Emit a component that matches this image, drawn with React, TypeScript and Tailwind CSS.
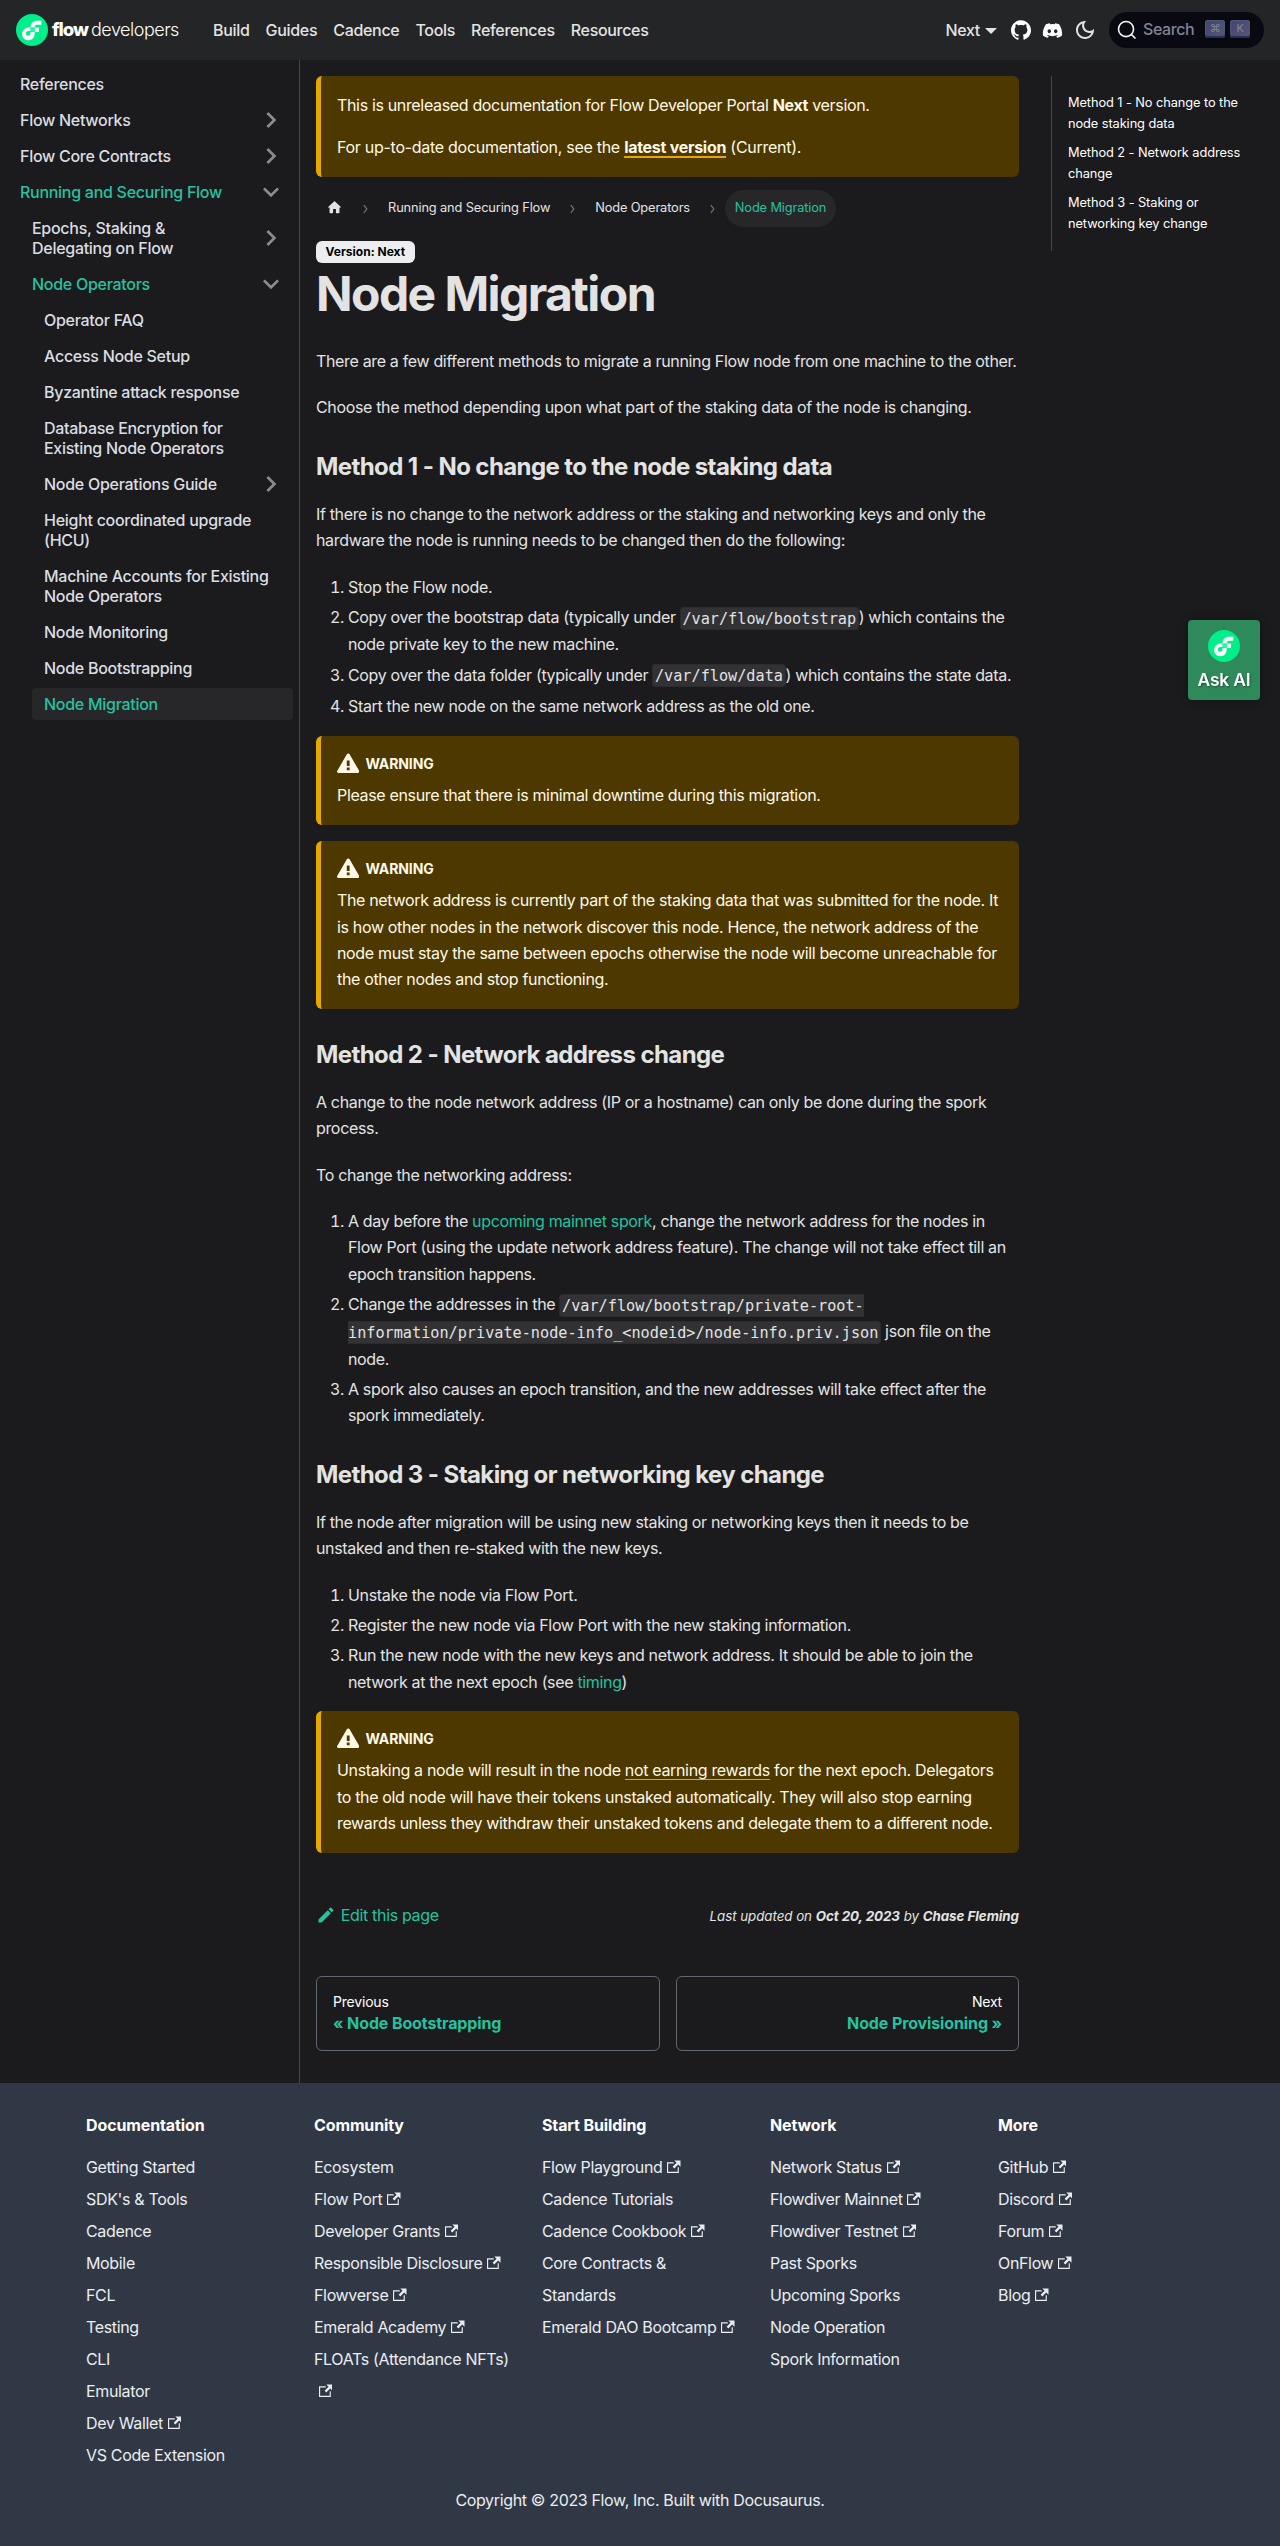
import type { ReactNode } from "react";
import { FaDiscord } from "react-icons/fa";
import { SiGithub } from "react-icons/si";

function FlowMark({ className }: { className: string }) {
  return (
    <svg viewBox="0 0 101 101" className={className}>
      <circle cx="50.5" cy="50.5" r="50.5" fill="#00ef8b" />
      <path
        fill="#fff"
        d="M46 57v4.500a7.500 7.500 0 1 1-7.500-7.500H46V43h-7.500A20 20 0 1 0 59 61.500V57Z"
      />
      <path fill="#fff" d="M46 43v-1.500C46 30 55 21.500 66 21.500h14V34H66c-4 0-7 3-7 7v2Z" />
      <path fill="#fff" d="M59 43h13.600v14H59Z" />
      <path fill="#16ff99" d="M46 43h13v14H46Z" />
    </svg>
  );
}

function Caret({ open }: { open: boolean }) {
  return (
    <svg
      viewBox="0 0 24 24"
      fill="#8d8d8e"
      className={open ? "mr-1.5 size-8 shrink-0 rotate-180" : "mr-1.5 size-8 shrink-0 rotate-90"}
    >
      <path d="M7.41 15.41L12 10.83l4.59 4.58L18 14l-6-6-6 6z" />
    </svg>
  );
}

type MenuEntry = { lines: string[]; level: 0 | 1 | 2; caret?: "open" | "closed"; green?: boolean; active?: boolean };

const MENU: MenuEntry[] = [
  { lines: ["References"], level: 0 },
  { lines: ["Flow Networks"], level: 0, caret: "closed" },
  { lines: ["Flow Core Contracts"], level: 0, caret: "closed" },
  { lines: ["Running and Securing Flow"], level: 0, caret: "open", green: true },
  { lines: ["Epochs, Staking &", "Delegating on Flow"], level: 1, caret: "closed" },
  { lines: ["Node Operators"], level: 1, caret: "open", green: true },
  { lines: ["Operator FAQ"], level: 2 },
  { lines: ["Access Node Setup"], level: 2 },
  { lines: ["Byzantine attack response"], level: 2 },
  { lines: ["Database Encryption for", "Existing Node Operators"], level: 2 },
  { lines: ["Node Operations Guide"], level: 2, caret: "closed" },
  { lines: ["Height coordinated upgrade", "(HCU)"], level: 2 },
  { lines: ["Machine Accounts for Existing", "Node Operators"], level: 2 },
  { lines: ["Node Monitoring"], level: 2 },
  { lines: ["Node Bootstrapping"], level: 2 },
  { lines: ["Node Migration"], level: 2, green: true, active: true },
];

// Nested levels step in by 12px; the highlighted row starts at the parent's text edge.
const INDENT = ["ml-0", "ml-3", "ml-6"];

function Sidebar() {
  return (
    <aside className="w-[300px] shrink-0 border-r border-[#444950] py-2 pr-1.5 pl-2">
      <ul className="flex flex-col gap-1 font-medium tracking-[-0.28px]">
        {MENU.map((m) => (
          <li key={m.lines[0]} className={INDENT[m.level]}>
            <a
              className={
                "flex items-center justify-between rounded leading-5 whitespace-nowrap " +
                (m.active ? "bg-[#272729] " : "") +
                (m.green ? "text-[#25c2a0]" : "text-[#dadde1]")
              }
            >
              <span className="py-1.5 pl-3">
                {m.lines.map((l) => (
                  <span key={l} className="block">
                    {l}
                  </span>
                ))}
              </span>
              {m.caret && <Caret open={m.caret === "open"} />}
            </a>
          </li>
        ))}
      </ul>
    </aside>
  );
}

function Navbar() {
  return (
    <nav className="flex h-[60px] items-center justify-between bg-[#242526] px-4 font-medium tracking-[-0.31px] text-[#e3e3e3]">
      <div className="flex items-center">
        <FlowMark className="size-8" />
        <div className="mr-[22px] ml-1 flex w-[139px] items-baseline whitespace-nowrap text-white">
          <span className="w-[39px] text-[18.500px] font-extrabold tracking-[-1px]">flow</span>
          <span className="text-[18px] font-light tracking-[-0.5px]">developers</span>
        </div>
        <div className="flex gap-4">
          {["Build", "Guides", "Cadence", "Tools", "References", "Resources"].map((t) => (
            <a key={t}>{t}</a>
          ))}
        </div>
      </div>
      <div className="flex items-center">
        <span>Next</span>
        <span className="mt-0.5 ml-[5px] border-x-[6.400px] border-t-[6.400px] border-x-transparent border-t-[#e3e3e3]" />
        <SiGithub className="ml-3.5 size-5 text-white" />
        <FaDiscord className="mr-px ml-[11px] h-[17px] w-[21px] text-white" />
        <svg viewBox="0 0 24 24" fill="#e3e3e3" className="mr-2.5 ml-[9px] size-6">
          <path d="M9.37,5.51C9.19,6.15,9.1,6.82,9.1,7.5c0,4.08,3.32,7.4,7.4,7.4c0.68,0,1.35-0.09,1.99-0.27C17.45,17.19,14.93,19,12,19 c-3.86,0-7-3.14-7-7C5,9.07,6.81,6.55,9.37,5.51z M12,3c-4.97,0-9,4.03-9,9s4.03,9,9,9s9-4.03,9-9c0-0.46-0.04-0.92-0.1-1.36 c-0.98,1.37-2.58,2.26-4.4,2.26c-2.98,0-5.4-2.42-5.4-5.4c0-1.81,0.89-3.42,2.26-4.4C12.92,3.04,12.46,3,12,3L12,3z" />
        </svg>
        <button className="ml-0.5 flex h-9 w-[155px] items-center rounded-full bg-[#090a11] pl-2 font-medium text-[#7f8497]">
          <svg viewBox="0 0 20 20" className="size-5" fill="none" stroke="#f5f6f7" strokeWidth="1.600" strokeLinecap="round">
            <path d="M14.386 14.386l4.088 4.088-4.088-4.088A7.533 7.533 0 1 1 3.733 3.733a7.533 7.533 0 0 1 10.653 10.653z" />
          </svg>
          <span className="ml-1.5 w-[62px] pb-0.5 text-left tracking-[-0.4px]">Search</span>
          <span className="flex gap-[5px] pb-0.5">
            {["⌘", "K"].map((k) => (
              <span
                key={k}
                className="flex h-[18px] w-5 items-center justify-center rounded-[3px] bg-gradient-to-tl from-[#565872] to-[#41456f] pb-0.5 text-[11px] leading-none font-normal text-[#7f8497] shadow-[inset_0_-2px_0_0_#282d55,inset_0_0_1px_1px_#51577d,0_2px_2px_0_rgba(3,4,9,.3)]"
              >
                {k}
              </span>
            ))}
          </span>
        </button>
      </div>
    </nav>
  );
}

function Crumb({ children }: { children: ReactNode }) {
  return <span className="flex items-center px-[10.200px]">{children}</span>;
}

function CrumbSep() {
  return (
    <svg viewBox="0 0 9 10" className="mx-2 h-2.5 w-[8.500px]" fill="none" stroke="#77777a" strokeWidth="1.200">
      <path d="M3 0.800L6.200 5L3 9.200" />
    </svg>
  );
}

function Warning({ children }: { children: ReactNode }) {
  return (
    <div className="mb-4 rounded-md border-l-[5px] border-[#e6a700] bg-[#4d3800] p-4 text-[#fff8e6]">
      <div className="mb-[6.300px] flex h-6 items-center text-sm font-bold tracking-[-0.1px]">
        <svg viewBox="0 0 16 16" fill="#fff8e6" className="mr-[6px] mb-px size-[22.400px]">
          <path d="M8.893 1.5c-.183-.31-.52-.5-.887-.5s-.703.19-.886.5L.138 13.499a.98.98 0 0 0 0 1.001c.193.31.53.501.886.501h13.964c.367 0 .704-.19.877-.5a1.03 1.03 0 0 0 .01-1.002L8.893 1.5zm.133 11.497H6.987v-2.003h2.039v2.003zm0-3.004H6.987V5.987h2.039v4.006z" />
        </svg>
        WARNING
      </div>
      <p>{children}</p>
    </div>
  );
}

function H2({ children }: { children: ReactNode }) {
  return <h2 className="mt-[31px] mb-[19px] text-2xl leading-[30px] font-bold tracking-[-0.590px]">{children}</h2>;
}

function Code({ children }: { children: ReactNode }) {
  return (
    <code className="rounded border border-black/10 bg-white/10 p-[1.600px] align-middle font-['DejaVu_Sans_Mono',monospace] text-[15.200px] leading-[25.080px] tracking-normal">
      {children}
    </code>
  );
}

function Steps({ children }: { children: ReactNode }) {
  return <ol className="mb-4 flex list-decimal flex-col gap-1 pl-8">{children}</ol>;
}

function Article() {
  return (
    <main className="w-[735px] shrink-0 px-4 pt-4 pb-8 tracking-[-0.340px] whitespace-nowrap">
      <div className="mb-4 flex flex-col gap-4 rounded-md border-l-[5px] border-[#e6a700] bg-[#4d3800] p-4 text-[#fff8e6]">
        <div>
          This is unreleased documentation for Flow Developer Portal <b>Next</b> version.
        </div>
        <div className="tracking-[-0.280px]">
          For up-to-date documentation, see the{" "}
          <a className="font-bold underline decoration-[#e6a700] decoration-[1.500px] underline-offset-[3px]">latest version</a>{" "}
          (Current).
        </div>
      </div>

      <nav className="mb-[12.800px] flex h-[31.400px] items-center text-[12.800px] tracking-[-0.13px]">
        <Crumb>
          <svg viewBox="0 0 24 24" fill="#e3e3e3" className="mb-0.5 size-[17px]">
            <path d="M10 19v-5h4v5c0 .55.45 1 1 1h3c.55 0 1-.45 1-1v-7h1.7c.46 0 .68-.57.33-.87L12.67 3.6c-.38-.34-.96-.34-1.34 0l-8.36 7.53c-.34.3-.13.87.33.87H5v7c0 .55.45 1 1 1h3c.55 0 1-.45 1-1z" />
          </svg>
        </Crumb>
        <CrumbSep />
        <Crumb>Running and Securing Flow</Crumb>
        <CrumbSep />
        <Crumb>Node Operators</Crumb>
        <CrumbSep />
        <span className="rounded-full bg-[#272729] px-[10.200px] py-[5.100px] text-[#25c2a0]">Node Migration</span>
      </nav>

      <div className="flex pt-1">
        <span className="flex h-[22px] items-center rounded-md bg-[#ebedf0] px-[9.600px] text-xs leading-3 font-bold tracking-normal text-black">
          Version: Next
        </span>
      </div>

      <h1 className="mt-px mb-6 text-5xl leading-[60px] font-bold tracking-[-1.570px]">Node Migration</h1>
      <p className="mb-5">There are a few different methods to migrate a running Flow node from one machine to the other.</p>
      <p>Choose the method depending upon what part of the staking data of the node is changing.</p>

      <H2>Method 1 - No change to the node staking data</H2>
      <p className="mb-5">
        If there is no change to the network address or the staking and networking keys and only the
        <br />
        hardware the node is running needs to be changed then do the following:
      </p>
      <Steps>
        <li>Stop the Flow node.</li>
        <li>
          Copy over the bootstrap data (typically under <Code>/var/flow/bootstrap</Code>) which contains the
          <br />
          node private key to the new machine.
        </li>
        <li>
          Copy over the data folder (typically under <Code>/var/flow/data</Code>) which contains the state data.
        </li>
        <li className="mb-px">Start the new node on the same network address as the old one.</li>
      </Steps>
      <Warning>Please ensure that there is minimal downtime during this migration.</Warning>
      <Warning>
        The network address is currently part of the staking data that was submitted for the node. It
        <br />
        is how other nodes in the network discover this node. Hence, the network address of the
        <br />
        node must stay the same between epochs otherwise the node will become unreachable for
        <br />
        the other nodes and stop functioning.
      </Warning>

      <H2>Method 2 - Network address change</H2>
      <p className="mb-5">
        A change to the node network address (IP or a hostname) can only be done during the spork
        <br />
        process.
      </p>
      <p className="mb-5">To change the networking address:</p>
      <Steps>
        <li>
          A day before the <a className="text-[#25c2a0]">upcoming mainnet spork</a>, change the network address for the nodes in
          <br />
          Flow Port (using the update network address feature). The change will not take effect till an
          <br />
          epoch transition happens.
        </li>
        <li>
          Change the addresses in the{" "}
          <Code>
            /var/flow/bootstrap/private-root-
            <br />
            {"information/private-node-info_<nodeid>/node-info.priv.json"}
          </Code>{" "}
          json file on the
          <br />
          node.
        </li>
        <li>
          A spork also causes an epoch transition, and the new addresses will take effect after the
          <br />
          spork immediately.
        </li>
      </Steps>

      <H2>Method 3 - Staking or networking key change</H2>
      <p className="mb-5">
        If the node after migration will be using new staking or networking keys then it needs to be
        <br />
        unstaked and then re-staked with the new keys.
      </p>
      <Steps>
        <li>Unstake the node via Flow Port.</li>
        <li>Register the new node via Flow Port with the new staking information.</li>
        <li>
          Run the new node with the new keys and network address. It should be able to join the
          <br />
          network at the next epoch (see <a className="text-[#25c2a0]">timing</a>)
        </li>
      </Steps>
      <Warning>
        Unstaking a node will result in the node{" "}
        <a className="underline decoration-[#e6a700] decoration-1 underline-offset-[3px]">not earning rewards</a> for the next epoch.
        Delegators
        <br />
        to the old node will have their tokens unstaked automatically. They will also stop earning
        <br />
        rewards unless they withdraw their unstaked tokens and delegate them to a different node.
      </Warning>

      <div className="mt-12 flex items-center justify-between">
        <a className="flex items-center text-[#25c2a0]">
          <svg viewBox="0 0 40 40" fill="#25c2a0" className="mr-[4.800px] size-5">
            <path d="m34.5 11.7l-3 3.1-6.3-6.3 3.1-3q0.5-0.5 1.2-0.5t1.1 0.5l3.9 3.9q0.5 0.4 0.5 1.1t-0.5 1.2z m-29.5 17.1l18.4-18.5 6.3 6.3-18.4 18.4h-6.3v-6.2z" />
          </svg>
          Edit this page
        </a>
        <span className="pt-0.5 text-[13.330px] tracking-[-0.040px] italic">
          Last updated on <b>Oct 20, 2023</b> by <b>Chase Fleming</b>
        </span>
      </div>

      <nav className="mt-[47px] grid grid-cols-2 gap-4 leading-5 tracking-[-0.120px]">
        <a className="h-[75px] rounded-md border border-[#606770] px-4 py-3.5">
          <div className="text-sm leading-[22px] tracking-[-0.2px] text-white">Previous</div>
          <div className="font-bold text-[#25c2a0]">« Node Bootstrapping</div>
        </a>
        <a className="h-[75px] rounded-md border border-[#606770] px-4 py-3.5 text-right">
          <div className="text-sm leading-[22px] tracking-[-0.2px] text-white">Next</div>
          <div className="font-bold text-[#25c2a0]">Node Provisioning »</div>
        </a>
      </nav>
    </main>
  );
}

function Toc() {
  const items = [
    ["Method 1 - No change to the", "node staking data"],
    ["Method 2 - Network address", "change"],
    ["Method 3 - Staking or", "networking key change"],
  ];
  return (
    <div className="px-4 pt-4">
      <ul className="flex flex-col gap-2 border-l border-[#444950] p-4 text-[12.800px] leading-[21.100px] tracking-[-0.080px] whitespace-nowrap text-white">
        {items.map(([a, b]) => (
          <li key={a}>
            {a}
            <br />
            {b}
          </li>
        ))}
      </ul>
    </div>
  );
}

type FootLink = [label: string, external?: boolean];

const FOOTER: { title: string; links: FootLink[] }[] = [
  {
    title: "Documentation",
    links: [
      ["Getting Started"],
      ["SDK's & Tools"],
      ["Cadence"],
      ["Mobile"],
      ["FCL"],
      ["Testing"],
      ["CLI"],
      ["Emulator"],
      ["Dev Wallet", true],
      ["VS Code Extension"],
    ],
  },
  {
    title: "Community",
    links: [
      ["Ecosystem"],
      ["Flow Port", true],
      ["Developer Grants", true],
      ["Responsible Disclosure", true],
      ["Flowverse", true],
      ["Emerald Academy", true],
      ["FLOATs (Attendance NFTs)\n", true],
    ],
  },
  {
    title: "Start Building",
    links: [
      ["Flow Playground", true],
      ["Cadence Tutorials"],
      ["Cadence Cookbook", true],
      ["Core Contracts &\nStandards"],
      ["Emerald DAO Bootcamp", true],
    ],
  },
  {
    title: "Network",
    links: [
      ["Network Status", true],
      ["Flowdiver Mainnet", true],
      ["Flowdiver Testnet", true],
      ["Past Sporks"],
      ["Upcoming Sporks"],
      ["Node Operation"],
      ["Spork Information"],
    ],
  },
  {
    title: "More",
    links: [
      ["GitHub", true],
      ["Discord", true],
      ["Forum", true],
      ["OnFlow", true],
      ["Blog", true],
    ],
  },
];

function Footer() {
  return (
    <footer className="h-[463px] bg-[#303846] px-[70px] pt-8 text-[#ebedf0]">
      <div className="grid grid-cols-5 tracking-[-0.340px]">
        {FOOTER.map((c) => (
          <div key={c.title} className="px-4 whitespace-pre">
            <div className="mb-4 leading-5 font-bold tracking-[-0.120px] text-white">{c.title}</div>
            <ul className="leading-8">
              {c.links.map(([label, external]) => (
                <li key={label}>
                  {label}
                  {external && (
                    <svg viewBox="0 0 24 24" fill="currentColor" className="ml-[4.800px] inline size-[13.500px] align-baseline">
                      <path d="M21 13v10h-21v-19h12v2h-10v15h17v-8h2zm3-12h-10.988l4.035 4-6.977 7.07 2.828 2.828 6.977-7.07 4.125 4.172v-11z" />
                    </svg>
                  )}
                </li>
              ))}
            </ul>
          </div>
        ))}
      </div>
      <div className="mt-4 text-center tracking-[-0.350px]">Copyright © 2023 Flow, Inc. Built with Docusaurus.</div>
    </footer>
  );
}

export default function App() {
  return (
    <div className="w-[1280px] bg-[#1b1b1d] font-['Inter',sans-serif] text-base leading-[26.400px] text-[#e3e3e3]">
      <Navbar />
      <div className="flex h-[2023px]">
        <Sidebar />
        <Article />
        <Toc />
      </div>
      <Footer />
      <button className="fixed top-[620px] right-5 flex h-20 w-[72px] flex-col items-center rounded bg-[#2f8a5b] pt-2.5 text-white shadow-[0_0_10px_rgba(0,0,0,.3)]">
        <FlowMark className="size-8" />
        <span className="mt-1.5 text-[17.500px] leading-6 font-semibold tracking-[-0.2px] [text-shadow:1px_1px_2px_rgba(0,0,0,.4)]">
          Ask AI
        </span>
      </button>
    </div>
  );
}
